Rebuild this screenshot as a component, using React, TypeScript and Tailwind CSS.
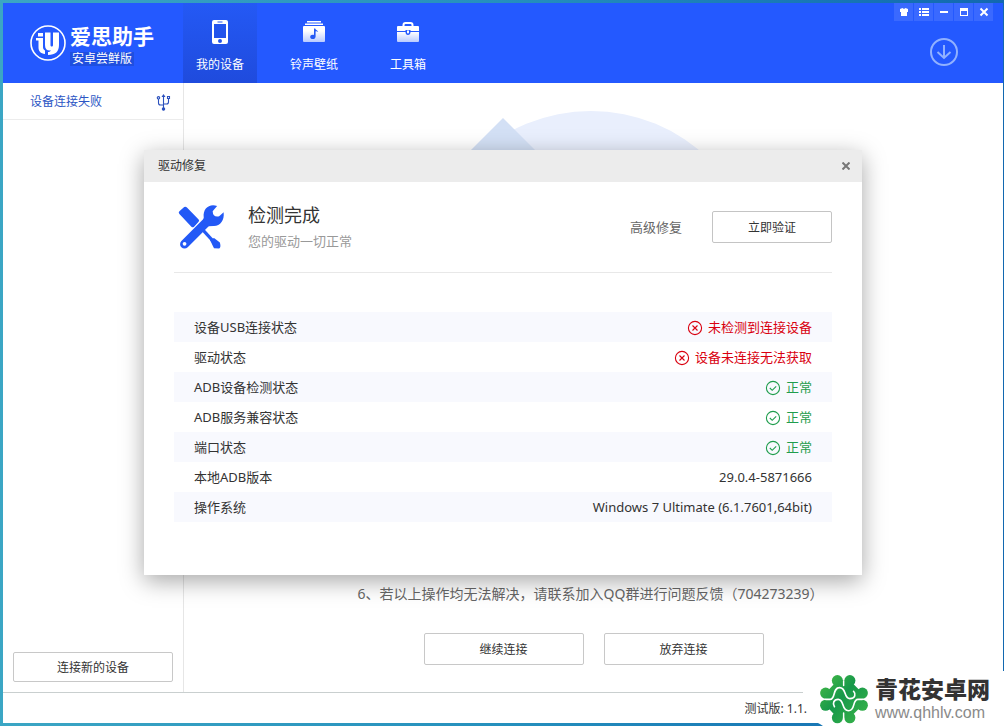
import { ReactNode } from "react";

interface TabProps {
  label: string;
  icon: ReactNode;
  active?: boolean;
}

interface StatusRow {
  label: string;
  value: string;
  state?: "error" | "ok";
}

const rows: StatusRow[] = [
  { label: "设备USB连接状态", value: "未检测到连接设备", state: "error" },
  { label: "驱动状态", value: "设备未连接无法获取", state: "error" },
  { label: "ADB设备检测状态", value: "正常", state: "ok" },
  { label: "ADB服务兼容状态", value: "正常", state: "ok" },
  { label: "端口状态", value: "正常", state: "ok" },
  { label: "本地ADB版本", value: "29.0.4-5871666" },
  { label: "操作系统", value: "Windows 7 Ultimate (6.1.7601,64bit)" },
];

const valueColors = {
  error: "text-[#d9000f]",
  ok: "text-[#1f9d4d]",
};

function PhoneIcon() {
  return (
    <svg width="18" height="26" viewBox="0 0 18 26">
      <path
        fillRule="evenodd"
        fill="#fff"
        d="M3 1h12a2 2 0 0 1 2 2v20a2 2 0 0 1-2 2H3a2 2 0 0 1-2-2V3a2 2 0 0 1 2-2zM3 5v14h12V5zM6.500 2.500v1h5v-1zM9 20a2 2 0 1 0 0 4 2 2 0 0 0 0-4z"
      />
    </svg>
  );
}

function MusicIcon() {
  return (
    <svg width="24" height="26" viewBox="0 0 24 26">
      <defs>
        <linearGradient id="music" x1="0" y1="0" x2="0" y2="1">
          <stop offset="0.3" stopColor="#fff" />
          <stop offset="1" stopColor="#b9cbff" />
        </linearGradient>
      </defs>
      <path d="M5 2h14v1.500H5zM3 4.500h18V6H3z" fill="#fff" />
      <rect x="1" y="7" width="22" height="16" rx="1" fill="url(#music)" />
      <path
        d="M12 9.500h1.200c.3 1.500 2.800 1.700 3 3.500-.8-.6-1.800-.8-2.600-.6v5c0 1.700-1.300 2.600-2.800 2.600s-2.600-.8-2.600-2.100c0-1.500 1.500-2.500 3.800-2z"
        fill="#2459f5"
      />
    </svg>
  );
}

function ToolboxIcon() {
  return (
    <svg width="24" height="26" viewBox="0 0 24 26">
      <defs>
        <linearGradient id="box" x1="0" y1="0" x2="0" y2="1">
          <stop offset="0" stopColor="#fff" />
          <stop offset="1" stopColor="#b9cbff" />
        </linearGradient>
      </defs>
      <path d="M7.500 8V6a2 2 0 0 1 2-2h5a2 2 0 0 1 2 2v2" fill="none" stroke="#fff" strokeWidth="2" />
      <path d="M2 7h20a1 1 0 0 1 1 1v4H14.500v-1h-5v1H1V8a1 1 0 0 1 1-1z" fill="#fff" />
      <path d="M1 13h8.500c0 1.700 1 3 2.500 3s2.500-1.300 2.500-3H23v9a1 1 0 0 1-1 1H2a1 1 0 0 1-1-1z" fill="url(#box)" />
      <path d="M11 11.500h2v2a1 1 0 0 1-2 0z" fill="#fff" />
    </svg>
  );
}

function BrandLogo() {
  return (
    <svg width="38" height="38" viewBox="0 0 38 38">
      <circle cx="19" cy="19" r="17" fill="none" stroke="#fff" strokeWidth="1.600" />
      <path d="M9 9h5v3.500H9z" fill="#fff" />
      <path d="M7 14h7v9c0 1.500.5 2.500 2 3.500v3.500c-4.500-.5-6.500-3-6.500-6.500V16.500H7z" fill="#fff" />
      <path
        d="M16 8.500h5.500V21c0 2 2.500 2 2.500 0V8.500h6V21c0 6.500-3.500 10-11 10v-3c1.500 0 2.500-.6 3-1.500-4 .5-6-1.500-6-5.500z"
        fill="#fff"
      />
    </svg>
  );
}

function UsbIcon() {
  return (
    <svg width="15" height="17" viewBox="0 0 15 17" fill="none" stroke="#2b50bd" strokeWidth="1.100">
      <path d="M7.500 2v13M2.500 5v4q0 2 2 2h3M12.500 5v3q0 2-2 2h-3" />
      <path d="M7.500 0l2 3h-4z" fill="#2b50bd" stroke="none" />
      <circle cx="2.500" cy="3.800" r="1.200" />
      <path d="M11.500 2.500h2v2h-2z" />
      <circle cx="7.500" cy="15" r="1.200" fill="#2b50bd" />
    </svg>
  );
}

function RepairIcon() {
  return (
    <svg width="48" height="48" viewBox="112 308 140 140">
      <path
        d="M119 332l14-12q4-3 8 1l34 35q3 3 0 7l-13 14q-4 4-8 0l-35-37q-4-4 0-8z"
        fill="#2359f6"
      />
      <path d="M134 428L204 358" stroke="#fff" strokeWidth="31" strokeLinecap="round" />
      <path d="M176 374l42 46" stroke="#2359f6" strokeWidth="9" />
      <path d="M208 416l12-6 17 13q4 14-2 18l-15-1z" fill="#2359f6" />
      <path d="M134 428L204 358" stroke="#2359f6" strokeWidth="26" strokeLinecap="round" />
      <path
        d="M229 317C206 309 187 325 190 350L186 370 204 376 218 375C238 376 251 359 248 335L235 347Q217 351 216 332z"
        fill="#2359f6"
      />
      <circle cx="134" cy="427" r="5.500" fill="#fff" />
    </svg>
  );
}

function StateIcon({ state }: { state: "error" | "ok" }) {
  return (
    <svg width="16" height="16" viewBox="0 0 16 16" fill="none" stroke="currentColor" strokeWidth="1.100">
      <circle cx="8" cy="8" r="6.600" />
      {state === "error" ? <path d="M5.500 5.500l5 5M10.500 5.500l-5 5" /> : <path d="M4.800 8l2.400 2.300 4-4" />}
    </svg>
  );
}

function CloverLogo() {
  const lobes = [
    [68, 39],
    [102, 39],
    [136, 73],
    [136, 106],
    [102, 140],
    [68, 140],
    [36, 106],
    [36, 73],
  ];

  return (
    <svg width="50" height="50" viewBox="18 21 136 136">
      <defs>
        <linearGradient id="clover" gradientUnits="userSpaceOnUse" x1="20" y1="30" x2="150" y2="150">
          <stop offset="0" stopColor="#48bb46" />
          <stop offset="0.45" stopColor="#16984a" />
          <stop offset="1" stopColor="#3cb549" />
        </linearGradient>
      </defs>
      <g fill="url(#clover)">
        <polygon points={lobes.map((p) => p.join(",")).join(" ")} />
        {lobes.map(([cx, cy]) => (
          <circle key={`${cx}-${cy}`} cx={cx} cy={cy} r="15" />
        ))}
      </g>
      <g fill="none" stroke="#fff" strokeWidth="4.500" strokeLinecap="round">
        <path d="M36 90H48C64 90 54 58 74 58C94 58 84 88 102 88C118 88 118 74 112 68" />
        <path d="M60 110C54 102 58 90 70 90C88 90 78 121 98 121C118 121 108 90 124 90H136" />
      </g>
      <path d="M85 52V40M85 127V141" stroke="#fff" strokeWidth="4" strokeLinecap="round" />
    </svg>
  );
}

function NavTab({ label, icon, active }: TabProps) {
  return (
    <button
      className={`flex w-[74px] flex-col items-center gap-2 pt-4 text-xs text-white ${
        active ? "bg-linear-to-b from-[#2459f5] to-[#1f4bdd]" : ""
      }`}
    >
      {icon}
      <span className="pt-1">{label}</span>
    </button>
  );
}

function WindowButtons() {
  const buttons = [
    { name: "皮肤", shape: <path d="M1 2l2.500-1 1.500 1 1.500-1L9 2v3H8v4H2V5H1z" fill="#fff" /> },
    { name: "菜单", shape: <path d="M0 1h2v2H0zM3 1h7v2H3zM0 4h2v2H0zM3 4h7v2H3zM0 7h2v2H0zM3 7h7v2H3z" fill="#fff" /> },
    { name: "最小化", shape: <path d="M1 4h8v2H1z" fill="#fff" /> },
    { name: "最大化", shape: <path fillRule="evenodd" d="M1 1h8v8H1zM2 4v4h6V4z" fill="#fff" /> },
    { name: "关闭", shape: <path d="M1.500 1.500l7 7M8.500 1.500l-7 7" stroke="#fff" strokeWidth="2" /> },
  ];

  return (
    <div className="flex gap-px">
      {buttons.map((b) => (
        <button key={b.name} aria-label={b.name} className="flex h-[18px] w-[19px] items-center justify-center bg-[#3a69ff]">
          <svg width="10" height="10" viewBox="0 0 10 10">
            {b.shape}
          </svg>
        </button>
      ))}
    </div>
  );
}

function Header() {
  return (
    <header className="flex h-20 bg-[#2459ff]">
      <div className="flex w-[180px] items-center gap-[3px] pl-[26px] text-white">
        <BrandLogo />
        <div className="flex flex-col items-start pt-1">
          <span className="text-[21px] leading-6 font-bold whitespace-nowrap">爱思助手</span>
          <span className="mt-1 bg-[#1f4fdf] px-0.5 text-xs leading-[14px]">安卓尝鲜版</span>
        </div>
      </div>
      <nav className="flex gap-5">
        <NavTab label="我的设备" icon={<PhoneIcon />} active />
        <NavTab label="铃声壁纸" icon={<MusicIcon />} />
        <NavTab label="工具箱" icon={<ToolboxIcon />} />
      </nav>
      <div className="ml-auto flex flex-col items-end pr-2.5">
        <WindowButtons />
        <button aria-label="下载" className="mt-4 mr-[34px]">
          <svg width="30" height="30" viewBox="0 0 30 30" fill="none" stroke="#91b1ff" strokeWidth="2">
            <circle cx="15" cy="15" r="13" />
            <path d="M15 8v13M8.500 15l6.500 6 6.500-6" />
          </svg>
        </button>
      </div>
    </header>
  );
}

function Sidebar() {
  return (
    <aside className="flex w-[181px] flex-col border-r border-[#e6e6e6]">
      <div className="flex h-[37px] items-center justify-between border-b border-[#ececec] pt-0.5 pr-3 pl-[27px] text-xs text-[#2b55c4]">
        <span>设备连接失败</span>
        <UsbIcon />
      </div>
      <button className="mx-2.5 mt-auto mb-2.5 h-[30px] rounded-xs border border-[#c8c8c8] pt-0.5 text-xs">
        连接新的设备
      </button>
    </aside>
  );
}

function RepairDialog() {
  return (
    <div className="absolute inset-0 flex items-center justify-center pb-0.5">
      <section
        role="dialog"
        aria-labelledby="dialog-title"
        className="w-[718px] bg-white shadow-[0_6px_22px_rgba(0,0,0,0.35)]"
      >
        <div className="flex h-8 items-center justify-between bg-[#ececec] pr-3 pl-3.5 text-xs">
          <h2 id="dialog-title">驱动修复</h2>
          <button aria-label="关闭">
            <svg width="8" height="8" viewBox="0 0 8 8" stroke="#777" strokeWidth="2">
              <path d="M0.500 0.500l7 7M7.500 0.500l-7 7" />
            </svg>
          </button>
        </div>
        <div className="px-[30px] pb-[53px]">
          <div className="flex h-[91px] items-center border-b border-[#e8e8e8] pl-[3px]">
            <RepairIcon />
            <div className="ml-[23px]">
              <h3 className="text-lg leading-7">检测完成</h3>
              <p className="text-[13px] leading-6 text-[#999]">您的驱动一切正常</p>
            </div>
            <button className="ml-auto pt-0.5 text-[13px] text-[#666]">高级修复</button>
            <button className="ml-[30px] h-8 w-[120px] rounded-xs border border-[#c4c4c4] pt-0.5 text-xs">
              立即验证
            </button>
          </div>
          <table className="mt-[39px] w-full text-[13px]">
            <tbody>
              {rows.map((row) => (
                <tr key={row.label} className="h-[30px] odd:bg-[#f8f9fe]">
                  <th scope="row" className="p-0 pt-0.5 pl-5 text-left font-normal">
                    {row.label}
                  </th>
                  <td className="p-0 pt-0.5 pr-5">
                    <div className={`flex items-center justify-end gap-[5px] ${row.state ? valueColors[row.state] : ""}`}>
                      {row.state && <StateIcon state={row.state} />}
                      {row.value}
                    </div>
                  </td>
                </tr>
              ))}
            </tbody>
          </table>
        </div>
      </section>
    </div>
  );
}

function SiteBadge() {
  return (
    <div className="absolute right-0 bottom-0 flex h-[55px] w-[201px] items-center">
      <svg width="201" height="55" viewBox="0 0 201 55" className="absolute inset-0">
        <path d="M0 0h201v55H20Q15 51 8 50V28H0z" fill="#fff" />
      </svg>
      <div className="relative flex items-center gap-1.5 pl-4">
        <CloverLogo />
        <div className="flex flex-col text-[#333]">
          <span className="text-[23px] leading-7 font-black whitespace-nowrap">青花安卓网</span>
          <a
            href="#"
            className="font-['Liberation_Sans',Arial,sans-serif] text-base leading-5 text-[#8a8a8a]"
          >
            www.qhhlv.com
          </a>
        </div>
      </div>
    </div>
  );
}

export default function App() {
  return (
    <div className="relative flex min-h-screen flex-col bg-linear-to-r from-[#3ba6c4] via-[#2590bd] to-[#1268b0] pt-[3px] pr-px pb-[3px] pl-[3px] font-['Noto_Sans','Noto_Sans_CJK_SC',sans-serif] text-[#333]">
      <div className="relative flex flex-1 flex-col bg-white">
        <Header />
        <div className="flex flex-1">
          <Sidebar />
          <main className="flex flex-1 flex-col items-center pt-7 pb-[27px]">
            <svg width="340" height="110" viewBox="0 0 340 110" className="mr-1.5">
              <circle cx="170" cy="169" r="169" fill="#e9effd" />
              <path d="M82 7L178 103H-14z" fill="#d3e0f5" />
            </svg>
            <p className="mt-auto mr-1.5 text-sm text-[#666]">
              6、若以上操作均无法解决，请联系加入QQ群进行问题反馈（704273239）
            </p>
            <div className="mt-[29px] flex gap-5">
              <button className="h-8 w-40 rounded-xs border border-[#c8c8c8] pt-0.5 text-xs">继续连接</button>
              <button className="h-8 w-40 rounded-xs border border-[#c8c8c8] pt-0.5 text-xs">放弃连接</button>
            </div>
          </main>
        </div>
        <footer className="flex h-[31px] items-center justify-end border-t border-[#c9cfcf] pt-0.5 pr-[196px] text-xs">
          测试版: 1.1.
        </footer>
        <RepairDialog />
      </div>
      <SiteBadge />
    </div>
  );
}
